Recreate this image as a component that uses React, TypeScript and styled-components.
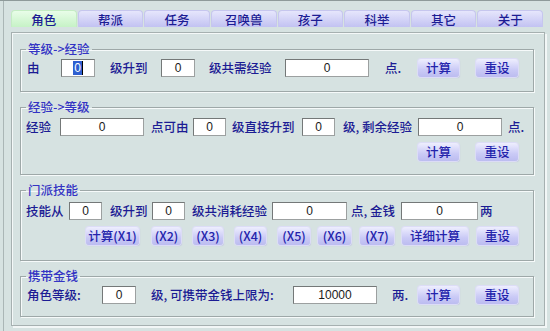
import React from 'react';
import styled, { createGlobalStyle } from 'styled-components';

const GlobalStyle = createGlobalStyle`
  html, body {
    margin: 0;
    padding: 0;
    background: #d6e2e1;
  }
  * {
    box-sizing: border-box;
  }
`;

const FONT = `"Noto Sans CJK SC", "Noto Sans", sans-serif`;
const LABEL = '#1c1c94';

const Page = styled.div`
  width: 550px;
  height: 331px;
  overflow: hidden;
  background: #d6e2e1;
  border-top: 1px solid #8e9a9a;
  font-family: ${FONT};
  font-size: 12.5px;
  font-weight: 500;
  color: ${LABEL};
`;

const Window = styled.div`
  height: 100%;
  margin-left: 3px;
  border-left: 1px solid #aab6b6;
  padding: 9px 5px 0 7px;
`;

const TabBar = styled.div`
  display: flex;
  gap: 1px;
  margin-right: 2px;
  height: 17px;
`;

const Tab = styled.div<{ $active?: boolean }>`
  flex: 1;
  display: flex;
  align-items: center;
  justify-content: center;
  border-radius: 4px 4px 0 0;
  border: 1px solid ${({ $active }) => ($active ? '#c4ecc4' : '#c6c6ee')};
  border-bottom: none;
  background: ${({ $active }) =>
    $active
      ? 'linear-gradient(#e8fde8, #c6f2c6)'
      : 'linear-gradient(#e6e6fc, #c2c2f2)'};
  color: ${LABEL};
  line-height: 15px;
`;

const Panel = styled.div`
  margin-top: 5px;
  height: 294px;
  border: 1px solid #a6b0b0;
  box-shadow: inset 1px 1px 0 #f4f8f8, 2px 2px 0 #f2f6f6;
  padding: 9px 10px 0 8px;
  display: flex;
  flex-direction: column;
  gap: 8px;
`;

const Group = styled.fieldset<{ $pt: number; $pb: number }>`
  margin: 0;
  min-width: 0;
  border: 1px solid #9ea8a8;
  box-shadow: inset 1px 1px 0 #f6fafa, 1px 1px 0 #f6fafa;
  padding: ${({ $pt, $pb }) => `${$pt}px 0 ${$pb}px 0`};
  display: flex;
  flex-direction: column;
  gap: 7px;
`;

const Legend = styled.legend`
  margin-left: 5px;
  padding: 0 2px;
  line-height: 14px;
  color: #3434c4;
`;

const Row = styled.div<{ $cols: string; $pl: number }>`
  display: grid;
  grid-template-columns: ${({ $cols }) => $cols};
  align-items: center;
  height: 18px;
  padding-left: ${({ $pl }) => $pl}px;
`;

const Text = styled.span`
  white-space: nowrap;
  line-height: 18px;
`;

const Field = styled.div<{ $w: number }>`
  width: ${({ $w }) => $w}px;
  height: 18px;
  background: #fff;
  border: 1px solid #747878;
  border-right-color: #9ca0a0;
  border-bottom-color: #9ca0a0;
  display: flex;
  align-items: center;
  justify-content: center;
  font-family: "Liberation Sans", Arial, sans-serif;
  font-size: 12px;
  font-weight: 400;
  color: #1a1a1a;
`;

const Selected = styled.span`
  background: #2f5fd0;
  color: #fff;
  padding: 0 1px;
  line-height: 14px;
  border-right: 1px solid #000;
`;

const Button = styled.div<{ $w: number }>`
  width: ${({ $w }) => $w}px;
  height: 18px;
  border-radius: 3px;
  background: linear-gradient(#eeeefe, #cacaf6 60%, #bcbcf0);
  box-shadow: 0 0 0 1px #dcdcf6, 1px 1px 1px #b8c0d8;
  display: flex;
  align-items: center;
  justify-content: center;
  color: #2424ac;
  white-space: nowrap;
  line-height: 16px;
`;

const tabs = ['角色', '帮派', '任务', '召唤兽', '孩子', '科举', '其它', '关于'];

const multi = [
  { t: '计算(X1)', w: 53 },
  { t: '(X2)', w: 29 },
  { t: '(X3)', w: 30 },
  { t: '(X4)', w: 31 },
  { t: '(X5)', w: 32 },
  { t: '(X6)', w: 33 },
  { t: '(X7)', w: 34 },
  { t: '详细计算', w: 66 },
  { t: '重设', w: 41 },
];

const App = () => {
  return (
    <>
      <GlobalStyle />
      <Page>
        <Window>
          <TabBar>
            {tabs.map((t, i) => (
              <Tab key={t} $active={i === 0}>
                {t}
              </Tab>
            ))}
          </TabBar>

          <Panel>
            {/* 等级 -> 经验 */}
            <Group $pt={3} $pb={14}>
              <Legend>等级-&gt;经验</Legend>
              <Row $pl={6} $cols="34px 49px 51px 48px 76px 100px 33px 58px 42px">
                <Text>由</Text>
                <Field $w={34}>
                  <Selected>0</Selected>
                </Field>
                <Text>级升到</Text>
                <Field $w={34}>0</Field>
                <Text>级共需经验</Text>
                <Field $w={84}>0</Field>
                <Text>点.</Text>
                <Button $w={41}>计算</Button>
                <Button $w={42}>重设</Button>
              </Row>
            </Group>

            {/* 经验 -> 等级 */}
            <Group $pt={4} $pb={13}>
              <Legend>经验-&gt;等级</Legend>
              <Row $pl={5} $cols="34px 91px 42px 39px 70px 41px 75px 90px 20px">
                <Text>经验</Text>
                <Field $w={84}>0</Field>
                <Text>点可由</Text>
                <Field $w={33}>0</Field>
                <Text>级直接升到</Text>
                <Field $w={33}>0</Field>
                <Text>级, 剩余经验</Text>
                <Field $w={84}>0</Field>
                <Text>点.</Text>
              </Row>
              <Row $pl={397} $cols="58px 42px">
                <Button $w={41}>计算</Button>
                <Button $w={42}>重设</Button>
              </Row>
            </Group>

            {/* 门派技能 */}
            <Group $pt={5} $pb={15}>
              <Legend>门派技能</Legend>
              <Row $pl={5} $cols="43px 41px 42px 40px 80px 79px 50px 79px 20px">
                <Text>技能从</Text>
                <Field $w={33}>0</Field>
                <Text>级升到</Text>
                <Field $w={33}>0</Field>
                <Text>级共消耗经验</Text>
                <Field $w={75}>0</Field>
                <Text>点, 金钱</Text>
                <Field $w={77}>0</Field>
                <Text>两</Text>
              </Row>
              <Row $pl={65} $cols="66px 41px 42px 43px 40px 42px 42px 75px 41px">
                {multi.map((b) => (
                  <Button key={b.t} $w={b.w}>
                    {b.t}
                  </Button>
                ))}
              </Row>
            </Group>

            {/* 携带金钱 */}
            <Group $pt={3} $pb={12}>
              <Legend>携带金钱</Legend>
              <Row $pl={6} $cols="75px 49px 142px 99px 26px 58px 42px">
                <Text>角色等级:</Text>
                <Field $w={34}>0</Field>
                <Text>级, 可携带金钱上限为:</Text>
                <Field $w={84}>10000</Field>
                <Text>两.</Text>
                <Button $w={41}>计算</Button>
                <Button $w={42}>重设</Button>
              </Row>
            </Group>
          </Panel>
        </Window>
      </Page>
    </>
  );
};

export default App;
